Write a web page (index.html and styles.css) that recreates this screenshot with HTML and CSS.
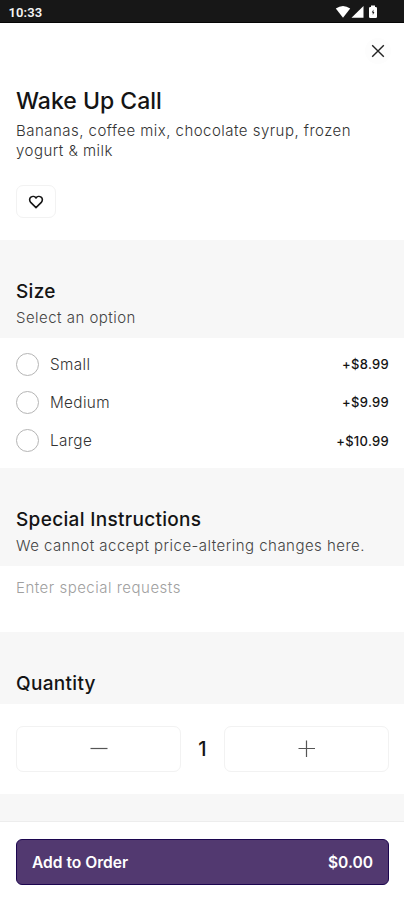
FILE: index.html
```html
<!DOCTYPE html>
<html lang="en">
<head>
<meta charset="utf-8">
<meta name="viewport" content="width=device-width, initial-scale=1">
<title>Wake Up Call</title>
<link rel="stylesheet" href="styles.css">
</head>
<body>
<div class="statusbar">
  <span class="clock">10:33</span>
  <svg class="status-icons" width="46" height="16" viewBox="0 0 46 16" fill="#fff">
    <path d="M.8 4.600Q8 -.8 15.200 4.600L8 13.800Z"/>
    <path d="M16.500 13.700L28.500 2V13.700Z"/>
    <path fill-rule="evenodd" d="M36 1.500h4V3h.7q1.300 0 1.300 1.300v8.400q0 1.300-1.300 1.300h-5.400q-1.300 0-1.300-1.300V4.300Q34 3 35.300 3H36ZM38.400 5.500l-1.600 3.100h1v2.500l1.600-3.200h-1Z"/>
  </svg>
</div>
<header class="intro">
  <button class="close" aria-label="Close">
    <svg width="14" height="14" viewBox="0 0 14 14" fill="none" stroke="#222" stroke-width="1.400"><path d="M1.200 1.200L12.800 12.800M12.800 1.200L1.200 12.800"/></svg>
  </button>
  <h1>Wake Up Call</h1>
  <p class="desc">Bananas, coffee mix, chocolate syrup, frozen<br>yogurt &amp; milk</p>
  <button class="favorite" aria-label="Favorite">
    <svg width="16" height="14" viewBox="0 0 16 14" fill="none" stroke="#161616" stroke-width="1.600" stroke-linejoin="round"><path d="M8 12.600L2.700 7.400C1.200 5.700 1.300 3.300 2.900 2.100C4.500 1 6.800 1.300 8 3C9.200 1.300 11.500 1 13.100 2.100C14.700 3.300 14.800 5.700 13.300 7.400Z"/></svg>
  </button>
</header>
<section class="heading"><h2>Size</h2><p>Select an option</p></section>
<div class="options">
  <label class="option"><span class="radio"></span><span class="name">Small</span><span class="price">+$8.99</span></label>
  <label class="option"><span class="radio"></span><span class="name">Medium</span><span class="price">+$9.99</span></label>
  <label class="option"><span class="radio"></span><span class="name">Large</span><span class="price">+$10.99</span></label>
</div>
<section class="heading"><h2>Special Instructions</h2><p>We cannot accept price-altering changes here.</p></section>
<div class="request">Enter special requests</div>
<section class="heading short"><h2>Quantity</h2></section>
<div class="quantity">
  <button class="step" aria-label="Decrease"><svg width="18" height="18" viewBox="0 0 18 18" stroke="#555" stroke-width="1.200"><path d="M.5 8.500H17.500"/></svg></button>
  <span class="count">1</span>
  <button class="step" aria-label="Increase"><svg width="18" height="18" viewBox="0 0 18 18" stroke="#555" stroke-width="1.200"><path d="M.5 8.500H17M8.500 .5V17"/></svg></button>
</div>
<footer class="footer">
  <button class="order"><span>Add to Order</span><span>$0.00</span></button>
</footer>
</body>
</html>
```
FILE: styles.css
```css
* { box-sizing: border-box; }
body {
  margin: 0;
  width: 404px;
  height: 900px;
  overflow: hidden;
  display: flex;
  flex-direction: column;
  background: #f7f7f7;
  font-family: Inter, "Liberation Sans", sans-serif;
  color: #141414;
}
h1, h2, p { margin: 0; }
button { font: inherit; padding: 0; background: #fff; border: 0; }
svg { display: block; }

.statusbar {
  height: 23px;
  padding: 0 23px 0 8.500px;
  display: flex;
  align-items: center;
  justify-content: space-between;
  background: #171717;
  border-bottom: 1px solid #050505;
}
.clock { font: 600 13px/16px Roboto, sans-serif; letter-spacing: .1px; color: #f4f4f4; padding-top: 3px; }
.status-icons { margin-top: 2px; }

.intro {
  height: 217px;
  padding: 15px 13px 0 16px;
  background: #fff;
  display: flex;
  flex-direction: column;
  align-items: flex-start;
}
.close {
  width: 26px;
  height: 26px;
  border-radius: 50%;
  background: #fdfdfd;
  display: grid;
  place-items: center;
  align-self: flex-end;
}
h1 { margin-top: 22px; font-size: 23px; line-height: 30px; font-weight: 500; }
.desc { margin-top: 5px; font-size: 15px; line-height: 20px; font-weight: 300; letter-spacing: .47px; color: #333; white-space: nowrap; }
.favorite {
  margin-top: 24px;
  width: 40px;
  height: 33px;
  border: 1px solid #f2f2f2;
  border-radius: 7px;
  display: grid;
  place-items: center;
}

.heading { height: 98px; padding: 39px 16px 0; }
.heading.short { height: 72px; }
h2 { font-size: 19px; line-height: 26px; font-weight: 500; letter-spacing: .32px; }
.heading p { margin-top: 3px; font-size: 15px; line-height: 20px; font-weight: 300; letter-spacing: .47px; color: #444; white-space: nowrap; }

.options { height: 130px; padding: 7px 15px 0 16px; background: #fff; }
.option { height: 38.300px; display: flex; align-items: center; }
.radio { width: 23px; height: 23px; border: 1px solid #b5b5b5; border-radius: 50%; }
.name { margin-left: 11px; font-size: 15.300px; font-weight: 300; letter-spacing: .35px; color: #333; }
.price { margin-left: auto; font-size: 13px; font-weight: 500; letter-spacing: .3px; }

.request { height: 66px; padding: 12px 16px; background: #fff; font-size: 15px; line-height: 20px; font-weight: 300; letter-spacing: .5px; color: #a0a0a0; }

.quantity {
  height: 90px;
  padding: 0 15px 0 16px;
  background: #fff;
  display: grid;
  grid-template-columns: 1fr 43px 1fr;
  align-items: center;
}
.step { height: 46px; border: 1px solid #f2f2f2; border-radius: 7px; display: grid; place-items: center; }
.count { text-align: center; font-size: 20px; font-weight: 500; }

.footer { margin-top: 27px; height: 79px; padding: 17px 15px 0 16px; background: #fff; border-top: 1px solid #ededed; }
.order {
  width: 100%;
  height: 46px;
  padding: 0 15px;
  border: 1.500px solid #1c064f;
  border-radius: 6px;
  background: #523970;
  color: #fff;
  display: flex;
  align-items: center;
  justify-content: space-between;
  font-size: 15.600px;
  font-weight: 600;
}
```
